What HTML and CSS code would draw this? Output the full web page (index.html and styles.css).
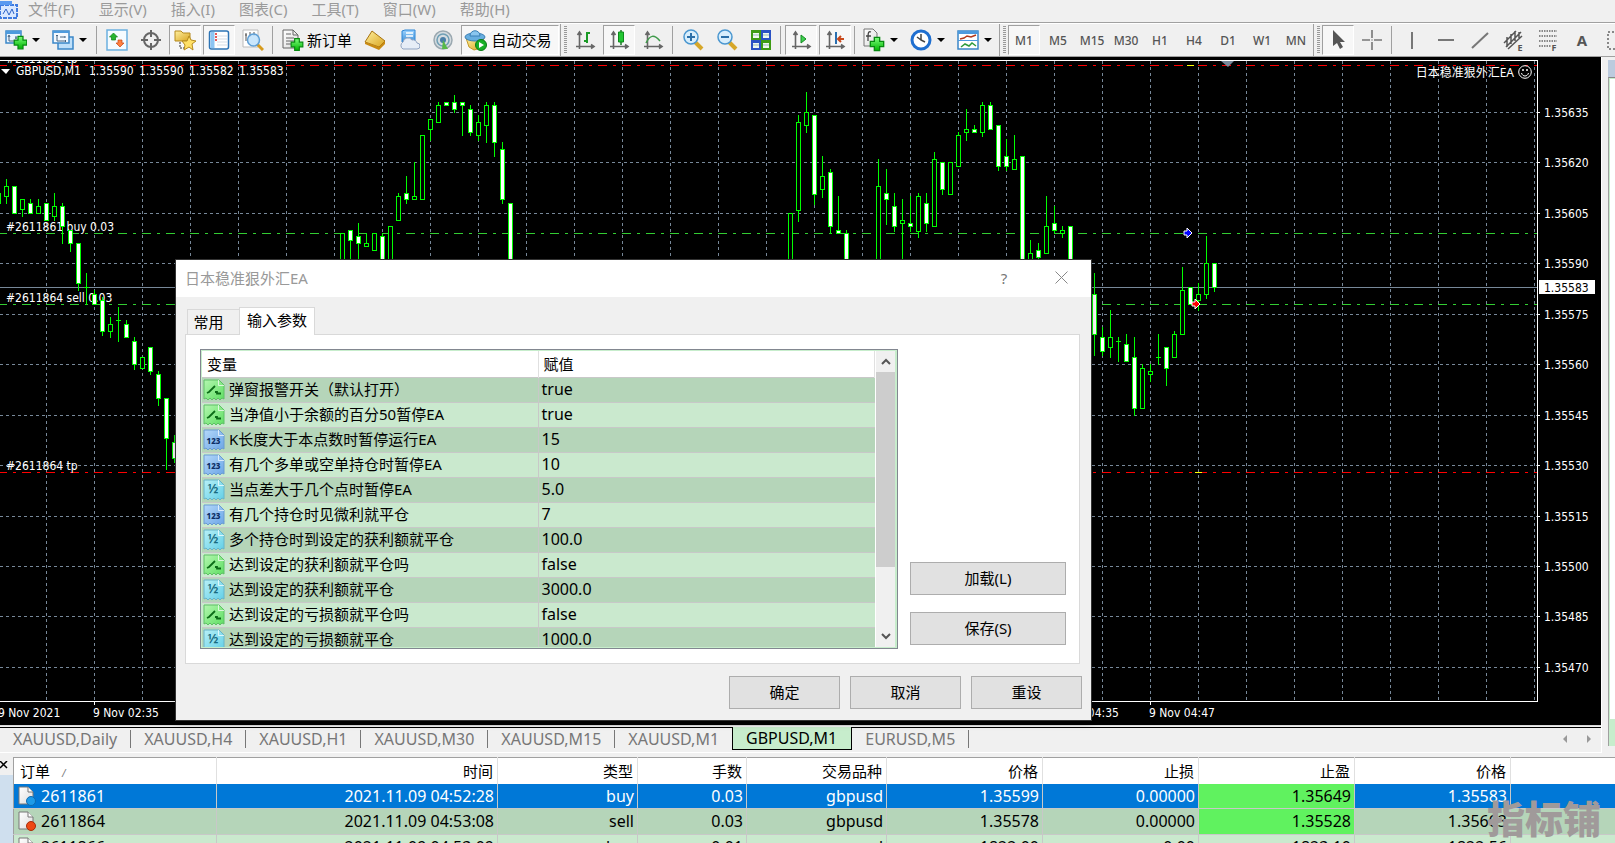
FILE: index.html
```
<!DOCTYPE html>
<html lang="zh-CN">
<head>
    <meta charset="UTF-8">
    <meta name="viewport" content="width=device-width, initial-scale=1.0">
    <title>GBPUSD,M1</title>
    <link rel="stylesheet" href="styles.css">
</head>
<body>
    <svg class="defs" width="0" height="0">
        <defs>
            <linearGradient id="g-green" x1="0" y1="0" x2="0" y2="1"><stop offset="0" stop-color="#7dff7d"/><stop offset="1" stop-color="#00b400"/></linearGradient>
            <linearGradient id="g-gold" x1="0" y1="0" x2="1" y2="1"><stop offset="0" stop-color="#fff0a0"/><stop offset="1" stop-color="#d9a520"/></linearGradient>
            <linearGradient id="g-blue" x1="0" y1="0" x2="0" y2="1"><stop offset="0" stop-color="#9fd4ff"/><stop offset="1" stop-color="#3d8fd6"/></linearGradient>
            <linearGradient id="g-page" x1="0" y1="0" x2="1" y2="1"><stop offset="0" stop-color="#fff"/><stop offset="1" stop-color="#dcdcdc"/></linearGradient>
            <linearGradient id="p-green" x1="0" y1="0" x2="1" y2="1"><stop offset="0" stop-color="#b4f7b0"/><stop offset="1" stop-color="#5ede62"/></linearGradient>
            <linearGradient id="p-blue" x1="0" y1="0" x2="1" y2="1"><stop offset="0" stop-color="#b4d8fa"/><stop offset="1" stop-color="#6ba5e6"/></linearGradient>
            <linearGradient id="p-cyan" x1="0" y1="0" x2="1" y2="1"><stop offset="0" stop-color="#b8f0f7"/><stop offset="1" stop-color="#62cfe6"/></linearGradient>
            <symbol id="plus" viewBox="0 0 12 12"><path d="M4 1h4v3h3v4H8v3H4V8H1V4h3z" fill="url(#g-green)" stroke="#078a10"/></symbol>
            <symbol id="axes" viewBox="0 0 22 22"><path d="M5.500 4v16M2 17.500h17M3.500 6l2-3 2 3M17 15.500l3 2-3 2" fill="none" stroke="#666" stroke-width="1.600"/></symbol>
            <symbol id="paper" viewBox="0 0 22 22"><path d="M1 1h15l5 5v14l-2-1-2 2-2-2-2 2-2-2-2 2-2-2-2 2-2-2-2 1z"/><path d="M15.500 1v5.500H21" fill="none" stroke="#fff" stroke-opacity=".7"/></symbol>
            <symbol id="i-bool" viewBox="0 0 22 22"><use href="#paper" fill="url(#p-green)" stroke="#5fbf66"/><path d="M4 14l2-1 6-6M12 13h2v1.500h4" fill="none" stroke="#0b6b17" stroke-width="1.800"/></symbol>
            <symbol id="i-int" viewBox="0 0 22 22"><use href="#paper" fill="url(#p-blue)" stroke="#6a9bd0"/><text x="10.500" y="15" class="glyph" fill="#0d2f66">123</text></symbol>
            <symbol id="i-dbl" viewBox="0 0 22 22"><use href="#paper" fill="url(#p-cyan)" stroke="#68b4c8"/><text x="10" y="14" class="glyph half" fill="#176a80">½</text></symbol>
            <symbol id="i-doc" viewBox="0 0 20 22"><path d="M2 2h9l5 5v12H2z" fill="url(#g-page)" stroke="#777"/><path d="M11 2v5h5" fill="#fff" stroke="#777"/></symbol>
        </defs>
    </svg>

    <nav class="menu-bar">
        <svg class="app-icon" width="18" height="19" viewBox="0 0 18 19"><path d="M0 5h17v13H0z" fill="#d9e8ff" stroke="#3f7be0" stroke-width="2" stroke-dasharray="4 1"/><path d="M0 1h12v4H0z" fill="#5a9af0"/><path d="M3 14l3-5 3 6 3-6 2 5" fill="none" stroke="#2a62c8"/></svg>
        <a href="#">文件(F)</a>
        <a href="#">显示(V)</a>
        <a href="#">插入(I)</a>
        <a href="#">图表(C)</a>
        <a href="#">工具(T)</a>
        <a href="#">窗口(W)</a>
        <a href="#">帮助(H)</a>
    </nav>

    <div class="toolbar">
        <button class="tool drop" aria-label="新图表"><svg width="22" height="22" viewBox="0 0 22 22"><path d="M1 2h15v12H1z" fill="#eaf4ff" stroke="#3b87c8" stroke-width="1.500"/><path d="M1 2h15v3H1z" fill="#4d9add"/><path d="M4 7v5h8M3 8l1-2 1 2M10 9h2M11 7v3" fill="none" stroke="#47637f"/><use href="#plus" x="8" y="6" width="15" height="15"/></svg></button>
        <button class="tool drop" aria-label="配置"><svg width="22" height="22" viewBox="0 0 22 22"><path d="M6 8h15v12H6z" fill="#bfe0fa" stroke="#3b87c8" stroke-width="1.500"/><path d="M1 2h16v12H1z" fill="#f3f9ff" stroke="#3b87c8" stroke-width="1.500"/><path d="M1 2h16v2H1z" fill="#4d9add"/><path d="M5 6v6h9M4 7l1-1 1 1M13 11l1 1-1 1M8 8h5M13 7v2" fill="none" stroke="#47637f"/></svg></button>
        <span class="sep"></span>
        <button class="tool" aria-label="市场报价"><svg width="22" height="22" viewBox="0 0 22 22"><path d="M1 1h20v20H1z" fill="#f5fbff" stroke="#6bb0e0" stroke-width="1.500"/><path d="M7.500 4l4 4H9.500v3h-4V8h-2z" fill="#27b52f" stroke="#0f7f18" stroke-width=".7"/><path d="M14 18l4-4h-2v-3h-4v3h-2z" fill="#ff8040" stroke="#c84510" stroke-width=".7"/></svg></button>
        <button class="tool" aria-label="数据窗口"><svg width="22" height="22" viewBox="0 0 22 22"><circle cx="11" cy="11" r="7" fill="none" stroke="#666" stroke-width="2"/><path d="M11 1v7M11 14v7M1 11h7M14 11h7" stroke="#666" stroke-width="2"/></svg></button>
        <button class="tool on" aria-label="导航"><svg width="22" height="22" viewBox="0 0 22 22"><path d="M1 2h6l2 2h7v8H1z" fill="url(#g-gold)" stroke="#b58a1e"/><path d="M6 13v6h4" fill="none" stroke="#333" stroke-dasharray="2 1"/><path d="M15 7l2 4 5 1-4 3 1 6-4-3-5 3 1-5-3-4h5z" fill="#ffe066" stroke="#b58a1e"/></svg></button>
        <button class="tool on" aria-label="终端"><svg width="22" height="22" viewBox="0 0 22 22"><rect x="1.500" y="2" width="19" height="18" rx="2" fill="#fff" stroke="#2e75b6" stroke-width="1.500"/><path d="M2.500 3h4v16h-4z" fill="#8cc4f2"/><path d="M9 7h10M9 10h10M9 13h10M9 16h10" stroke="#d5dde5"/><path d="M7 5h2M7 8h2M7 11h2" stroke="#e02020" stroke-width="1.500"/></svg></button>
        <button class="tool" aria-label="策略测试"><svg width="22" height="22" viewBox="0 0 22 22"><path d="M1 1h15v17H1z" fill="#fff" stroke="#bbb"/><path d="M4 4v8M3 6h2M8 3v5M12 3v4" stroke="#555"/><path d="M15 15l6 6" stroke="#d69a1c" stroke-width="3"/><circle cx="11.500" cy="11" r="6" fill="#bfe2fb" fill-opacity=".85" stroke="#5e9fd6" stroke-width="1.500"/></svg></button>
        <span class="sep"></span>
        <button class="tool wide"><svg width="22" height="24" viewBox="0 0 22 24"><path d="M1 2h10l5 5v13H1z" fill="url(#g-page)" stroke="#666"/><path d="M11 2v5h5M4 6h5M4 10h8M4 13h8M4 16h5" fill="none" stroke="#666"/><use href="#plus" x="8" y="9" width="14" height="15"/></svg><span>新订单</span></button>
        <button class="tool" aria-label="MetaEditor"><svg width="22" height="22" viewBox="0 0 22 22"><path d="M8 2l13 10-6 6-14-5z" fill="url(#g-gold)" stroke="#a87310"/><path d="M1 13l14 5 6-6v3l-6 6-14-6z" fill="#c98b12"/></svg></button>
        <button class="tool" aria-label="社区"><svg width="22" height="22" viewBox="0 0 22 22"><path d="M4 2l3-1h10v12H4z" fill="url(#g-blue)" stroke="#2d86d6"/><path d="M8 4h7M8 7h7" stroke="#fff" stroke-width="1.500"/><path d="M5 20a4 4 0 0 1 0-7 5 5 0 0 1 9-2 4 4 0 0 1 5 3 3 3 0 0 1 0 6z" fill="#e6edf7" stroke="#8fa3c2"/></svg></button>
        <button class="tool" aria-label="信号"><svg width="22" height="22" viewBox="0 0 22 22"><circle cx="11" cy="11" r="9" fill="#d5dce0" stroke="#9aa8b0" stroke-width="1.500"/><circle cx="11" cy="11" r="6" fill="none" stroke="#6f9fb5" stroke-width="1.500"/><circle cx="11" cy="11" r="3" fill="#4a7fa8"/><path d="M11 11l5 9H10z" fill="#57b947"/></svg></button>
        <button class="tool wide on"><svg width="24" height="22" viewBox="0 0 24 22"><path d="M2 9h18l-3 10-7 2-5-3z" fill="url(#g-gold)" stroke="#c39a28"/><ellipse cx="11" cy="8" rx="10" ry="4" fill="#67aee0" stroke="#3a7fb5"/><path d="M6 7c0-7 10-7 10 0z" fill="#8ac6ef" stroke="#3a7fb5"/><circle cx="17" cy="16" r="5.500" fill="#17b026" stroke="#0b7a15"/><path d="M15 13l5 3-5 3z" fill="#fff"/></svg><span>自动交易</span></button>
        <span class="grip"></span>
        <button class="tool" aria-label="柱状图"><svg width="22" height="22" viewBox="0 0 22 22"><use href="#axes"/><path d="M13 3v11M13 4h3M10 12h3" stroke="#1b9a26" stroke-width="2"/></svg></button>
        <button class="tool on" aria-label="蜡烛图"><svg width="22" height="22" viewBox="0 0 22 22"><use href="#axes"/><path d="M13 1v15" stroke="#1b7a26" stroke-width="1.500"/><path d="M10.500 3h5v10h-5z" fill="#22c632" stroke="#0d8a1b"/></svg></button>
        <button class="tool" aria-label="折线图"><svg width="22" height="22" viewBox="0 0 22 22"><use href="#axes"/><path d="M4 14c4-8 8-9 14-2" fill="none" stroke="#3f9a4a" stroke-width="1.500"/></svg></button>
        <span class="sep"></span>
        <button class="tool" aria-label="放大"><svg width="22" height="22" viewBox="0 0 22 22"><path d="M13 13l7 7" stroke="#d6a72a" stroke-width="4"/><circle cx="9" cy="8" r="7" fill="#d8eefc" stroke="#4a97d0" stroke-width="1.500"/><path d="M5 8h8M9 4v8" stroke="#2b6fa8" stroke-width="2"/></svg></button>
        <button class="tool" aria-label="缩小"><svg width="22" height="22" viewBox="0 0 22 22"><path d="M13 13l7 7" stroke="#d6a72a" stroke-width="4"/><circle cx="9" cy="8" r="7" fill="#d8eefc" stroke="#4a97d0" stroke-width="1.500"/><path d="M5 8h8" stroke="#2b6fa8" stroke-width="2"/></svg></button>
        <button class="tool" aria-label="平铺"><svg width="22" height="22" viewBox="0 0 22 22"><path d="M1 1h10v10H1zM11 11h10v10H11z" fill="#3d9b12"/><path d="M11 1h10v10H11zM1 11h10v10H1z" fill="#2a52c4"/><path d="M3 4h6v5H3zM13 4h6v5h-6zM3 14h6v5H3zM13 14h6v5h-6z" fill="#eef8ee"/><path d="M3 6h6M13 6h6M3 16h6M13 16h6" stroke="#9bb"/></svg></button>
        <span class="sep"></span>
        <button class="tool on" aria-label="自动滚动"><svg width="22" height="22" viewBox="0 0 22 22"><use href="#axes"/><path d="M11 6l5 4-5 4z" fill="#3fd050" stroke="#128a20"/></svg></button>
        <button class="tool on" aria-label="图表平移"><svg width="22" height="22" viewBox="0 0 22 22"><use href="#axes"/><path d="M12 3v12" stroke="#2a6fb0" stroke-width="2"/><path d="M14 10h6M17 7l-3 3 3 3" fill="none" stroke="#c8481a" stroke-width="2"/></svg></button>
        <span class="sep"></span>
        <button class="tool drop" aria-label="指标"><svg width="22" height="24" viewBox="0 0 22 24"><path d="M1 1h9l4 4v13H1z" fill="url(#g-page)" stroke="#777"/><path d="M8 4c-3-1-3 1-3 9M3 8h5" fill="none" stroke="#444" stroke-width="1.300"/><use href="#plus" x="6" y="8" width="16" height="16"/></svg></button>
        <button class="tool drop" aria-label="时间周期"><svg width="22" height="22" viewBox="0 0 22 22"><circle cx="11" cy="11" r="9" fill="#fff" stroke="#1f6fd0" stroke-width="3"/><path d="M11 5v6l4 2M7 8l4 3" fill="none" stroke="#444" stroke-width="1.500"/></svg></button>
        <button class="tool drop" aria-label="模板"><svg width="22" height="22" viewBox="0 0 22 22"><path d="M1 2h20v18H1z" fill="#fff" stroke="#3b87c8" stroke-width="1.500"/><path d="M1 2h20v3H1zM1 11h20v1H1z" fill="#4d9add"/><path d="M3 10l4-1 3-2 4 1 5-2" fill="none" stroke="#b3391b" stroke-width="1.500"/><path d="M4 18l4-3 4 2 3-3 4 3" fill="none" stroke="#2f9a3a" stroke-width="1.500"/></svg></button>
        <span class="grip"></span>
        <button class="tool tf on">M1</button>
        <button class="tool tf">M5</button>
        <button class="tool tf">M15</button>
        <button class="tool tf">M30</button>
        <button class="tool tf">H1</button>
        <button class="tool tf">H4</button>
        <button class="tool tf">D1</button>
        <button class="tool tf">W1</button>
        <button class="tool tf">MN</button>
        <span class="grip"></span>
        <button class="tool on" aria-label="光标"><svg width="22" height="22" viewBox="0 0 22 22"><path d="M6 1v16l4-3 3 6 3-2-3-5h5z" fill="#555"/></svg></button>
        <button class="tool" aria-label="十字准线"><svg width="22" height="22" viewBox="0 0 22 22"><path d="M11 1v8M11 13v8M1 11h8M13 11h8M10.500 11h1" stroke="#777" stroke-width="1.600"/></svg></button>
        <span class="sep"></span>
        <button class="tool" aria-label="垂直线"><svg width="22" height="22" viewBox="0 0 22 22"><path d="M11 3v17" stroke="#777" stroke-width="2"/></svg></button>
        <button class="tool" aria-label="水平线"><svg width="22" height="22" viewBox="0 0 22 22"><path d="M3 11h16" stroke="#777" stroke-width="2"/></svg></button>
        <button class="tool" aria-label="趋势线"><svg width="22" height="22" viewBox="0 0 22 22"><path d="M3 19L19 4" stroke="#777" stroke-width="2"/></svg></button>
        <button class="tool" aria-label="等距通道"><svg width="22" height="22" viewBox="0 0 22 22"><path d="M1 14L13 2M3 18L18 3M5 20L19 7M4 8v10M8 5v10M12 2v10M16 3v6" stroke="#555" stroke-width="1.500"/><text x="17" y="22" class="mark">E</text></svg></button>
        <button class="tool" aria-label="斐波纳契"><svg width="22" height="22" viewBox="0 0 22 22"><path d="M2 2h18M2 7h18M2 12h18M2 17h12" stroke="#666" stroke-width="1.500" stroke-dasharray="1.500 1"/><text x="17" y="22" class="mark">F</text></svg></button>
        <button class="tool letter">A</button>
        <button class="tool" aria-label="文本标签"><svg width="22" height="22" viewBox="0 0 22 22"><path d="M3 3h17v17H3z" fill="none" stroke="#666" stroke-width="1.500" stroke-dasharray="2 2"/></svg></button>
    </div>

    <div class="workspace">
        <main class="charts">
            <div class="chart">
                <div class="plot-row">
                    <svg id="plot" class="plot"></svg>
                    <svg id="price-axis" class="price-axis"></svg>
                </div>
                <svg id="time-axis" class="time-axis"></svg>
                <div class="chart-title">日本稳准狠外汇EA <svg width="14" height="14" viewBox="0 0 14 14"><circle cx="7" cy="7" r="6.300" fill="#000" stroke="#fff"/><circle cx="5" cy="5" r="1" fill="#fff"/><circle cx="9" cy="5" r="1" fill="#fff"/><path d="M3.500 8c1 4 6 4 7 0" fill="none" stroke="#fff"/></svg></div>
            </div>
            <div class="chart-tabs">
                <button>XAUUSD,Daily</button>
                <button>XAUUSD,H4</button>
                <button>XAUUSD,H1</button>
                <button>XAUUSD,M30</button>
                <button>XAUUSD,M15</button>
                <button>XAUUSD,M1</button>
                <button class="active">GBPUSD,M1</button>
                <button>EURUSD,M5</button>
                <span class="tab-scroll"><svg width="30" height="10" viewBox="0 0 30 10"><path d="M5 1v8L1 5zM25 1v8l4-4z" fill="#999"/></svg></span>
            </div>
        </main>
        <aside class="side-panel">
            <div class="side-head"></div>
            <div class="side-body"></div>
        </aside>

        <section class="dialog" role="dialog" aria-label="日本稳准狠外汇EA">
            <header class="dialog-title">
                <span>日本稳准狠外汇EA</span>
                <button class="help" aria-label="帮助">?</button>
                <button aria-label="关闭"><svg width="13" height="13" viewBox="0 0 13 13"><path d="M.5.5l12 12M12.500.5l-12 12" stroke="#888"/></svg></button>
            </header>
            <div class="dialog-tabs">
                <button>常用</button>
                <button class="active">输入参数</button>
            </div>
            <div class="dialog-page">
                <div class="param-box">
                    <div class="param-list">
                        <table class="params">
                            <thead><tr><th class="name">变量</th><th>赋值</th></tr></thead>
                            <tbody>
                                <tr><td><svg><use href="#i-bool"/></svg>弹窗报警开关（默认打开）</td><td>true</td></tr>
                                <tr><td><svg><use href="#i-bool"/></svg>当净值小于余额的百分50暂停EA</td><td>true</td></tr>
                                <tr><td><svg><use href="#i-int"/></svg>K长度大于本点数时暂停运行EA</td><td>15</td></tr>
                                <tr><td><svg><use href="#i-int"/></svg>有几个多单或空单持仓时暂停EA</td><td>10</td></tr>
                                <tr><td><svg><use href="#i-dbl"/></svg>当点差大于几个点时暂停EA</td><td>5.0</td></tr>
                                <tr><td><svg><use href="#i-int"/></svg>有几个持仓时见微利就平仓</td><td>7</td></tr>
                                <tr><td><svg><use href="#i-dbl"/></svg>多个持仓时到设定的获利额就平仓</td><td>100.0</td></tr>
                                <tr><td><svg><use href="#i-bool"/></svg>达到设定的获利额就平仓吗</td><td>false</td></tr>
                                <tr><td><svg><use href="#i-dbl"/></svg>达到设定的获利额就平仓</td><td>3000.0</td></tr>
                                <tr><td><svg><use href="#i-bool"/></svg>达到设定的亏损额就平仓吗</td><td>false</td></tr>
                                <tr><td><svg><use href="#i-dbl"/></svg>达到设定的亏损额就平仓</td><td>1000.0</td></tr>
                            </tbody>
                        </table>
                    </div>
                    <div class="scrollbar">
                        <button aria-label="向上"><svg width="10" height="7" viewBox="0 0 10 7"><path d="M1 6l4-4 4 4" fill="none" stroke="#555" stroke-width="2"/></svg></button>
                        <div class="thumb"></div>
                        <button aria-label="向下"><svg width="10" height="7" viewBox="0 0 10 7"><path d="M1 1l4 4 4-4" fill="none" stroke="#555" stroke-width="2"/></svg></button>
                    </div>
                </div>
                <div class="side-buttons">
                    <button class="btn">加载(L)</button>
                    <button class="btn">保存(S)</button>
                </div>
            </div>
            <footer class="dialog-actions">
                <button class="btn">确定</button>
                <button class="btn">取消</button>
                <button class="btn">重设</button>
            </footer>
        </section>
    </div>

    <section class="terminal">
        <div class="terminal-side"><button aria-label="关闭"><svg width="8" height="8" viewBox="0 0 8 8"><path d="M0 0l7 7M7 0L0 7" stroke="#000" stroke-width="1.500"/></svg></button></div>
        <table class="orders">
            <colgroup><col class="c-order"><col class="c-time"><col class="c-type"><col class="c-lots"><col class="c-symbol"><col class="c-price"><col class="c-price"><col class="c-price"><col class="c-price"><col></colgroup>
            <thead>
                <tr><th>订单<i class="sort">/</i></th><th>时间</th><th>类型</th><th>手数</th><th>交易品种</th><th>价格</th><th>止损</th><th>止盈</th><th>价格</th><th></th></tr>
            </thead>
            <tbody>
                <tr class="selected"><td><svg width="20" height="22"><use href="#i-doc"/><circle cx="14" cy="16" r="4.500" fill="#1e9be8" stroke="#0f6bb0"/></svg>2611861</td><td>2021.11.09 04:52:28</td><td>buy</td><td>0.03</td><td>gbpusd</td><td>1.35599</td><td>0.00000</td><td class="hit">1.35649</td><td>1.35583</td><td></td></tr>
                <tr><td><svg width="20" height="22"><use href="#i-doc"/><circle cx="14" cy="16" r="4.500" fill="#ee4a14" stroke="#a82c08"/></svg>2611864</td><td>2021.11.09 04:53:08</td><td>sell</td><td>0.03</td><td>gbpusd</td><td>1.35578</td><td>0.00000</td><td class="hit">1.35528</td><td>1.35603</td><td></td></tr>
                <tr><td><svg width="20" height="22"><use href="#i-doc"/><circle cx="14" cy="16" r="4.500" fill="#1e9be8" stroke="#0f6bb0"/></svg>2611866</td><td>2021.11.09 04:53:09</td><td>buy</td><td>0.01</td><td>xauusd</td><td>1822.00</td><td>0.00</td><td>1823.10</td><td>1822.56</td><td></td></tr>
            </tbody>
        </table>
        <div class="watermark">指标铺</div>
    </section>

    <script src="chart.js"></script>
</body>
</html>
```
FILE: styles.css
```
* { box-sizing: border-box; }
body { margin: 0; height: 100vh; display: flex; flex-direction: column; overflow: hidden; background: #f0f0f0; color: #000; font-family: "Noto Sans", "Noto Sans CJK SC", sans-serif; font-size: 15px; }
button { font: inherit; color: inherit; background: none; border: none; padding: 0; }
.defs { position: absolute; }
.glyph { font-size: 8px; font-weight: 800; text-anchor: middle; }
.glyph.half { font-size: 13px; font-weight: 600; }
.mark { font-size: 9px; font-weight: 700; text-anchor: middle; fill: #555; }

/* menu */
.menu-bar { flex: none; display: flex; gap: 24px; height: 23px; border-bottom: 1px solid #a0a0a0; line-height: 19px; }
.menu-bar a { color: #9a9a9a; text-decoration: none; }
.app-icon { margin-right: -14px; }

/* toolbar */
.toolbar { flex: none; display: flex; align-items: center; height: 34px; border-top: 1px solid #fff; border-bottom: 1px solid #a0a0a0; overflow: hidden; }
.tool { flex: none; display: flex; align-items: center; justify-content: center; width: 32px; height: 30px; margin: 0 1px; }
.tool svg { flex: none; }
.tool.on { background: #f7f7f7; border: 1px solid; border-color: #a0a0a0 #fff #fff #a0a0a0; }
.tool.drop { width: 45px; gap: 5px; justify-content: flex-start; padding-left: 4px; }
.tool.drop::after { content: ""; border: 4px solid transparent; border-top-color: #000; border-bottom: none; }
.tool.wide { width: 80px; gap: 3px; white-space: nowrap; }
.tool.wide span { padding-bottom: 2px; }
.tool.wide.on { gap: 3px; width: 98px; padding-right: 4px; }
.tool.tf { font-size: 12px; font-weight: 500; color: #555; }
.tool.letter { font-weight: 700; color: #555; }
.sep { flex: none; width: 1px; height: 28px; margin: 0 3px 0 2px; background: #a0a0a0; }
.grip { flex: none; width: 8px; height: 34px; border-left: 1px solid #a0a0a0; background: repeating-linear-gradient(#999 0 1px, #f0f0f0 1px 2px) 3px 3px / 3px 27px no-repeat; }

/* chart */
.workspace { flex: 1; min-height: 0; display: flex; position: relative; }
.charts { flex: 1; min-width: 0; display: flex; flex-direction: column; }
.chart { flex: 1; min-height: 0; display: flex; flex-direction: column; background: #000; padding-top: 3px; position: relative; }
.plot-row { flex: 1; min-height: 0; display: flex; }
.plot { flex: 1; min-width: 0; height: 100%; border: 1px solid #fff; border-left: none; }
.price-axis { flex: none; width: 63px; height: 100%; }
.time-axis { flex: none; width: 100%; height: 23px; }
.plot text, .price-axis text, .time-axis text { font-family: "DejaVu Sans Condensed", "Noto Sans", sans-serif; font-size: 12px; fill: #fff; white-space: pre; }
.price-axis text.current { fill: #000; }
.chart-title { position: absolute; top: 6px; right: 69px; display: flex; align-items: center; gap: 4px; font-size: 12px; color: #fff; }
.grid { stroke: #778899; stroke-dasharray: 3 3; }
.order-line { stroke-dasharray: 9 6 3 6; stroke-dashoffset: 2; }
.candle { stroke: #0f0; }

.chart-tabs { flex: none; display: flex; height: 28px; padding-bottom: 3px; border-bottom: 1px solid #fff; font-size: 16px; color: #777; background: linear-gradient(#d8d8d8 0 1px, #f0f0f0 1px 2px, #000 2px 3px, #f0f0f0 3px); }
.chart-tabs button { padding: 3px 14px 0 13px; background: linear-gradient(#777, #777) right 5px / 1px 18px no-repeat; }
.chart-tabs button.active { margin: 2px 0 -1px -1px; padding-top: 0; color: #000; background: #c7edcc; border: 1px solid #000; border-top: none; }
.tab-scroll { margin: 8px 9px 0 auto; line-height: 10px; }

.side-panel { flex: none; width: 14px; background: #f0f0f0; border-left: 1px solid #fff; padding: 3px 0 0 6px; display: flex; flex-direction: column; }
.side-head { height: 17px; background: #bccbde; }
.side-body { flex: 1; margin-bottom: 7px; background: linear-gradient(#fff, #fff) no-repeat 1px 1px / 100% 640px, #c7edcc; border-top: 1px solid #888; border-left: 1px solid #a0a0a0; }

/* dialog */
.dialog { position: absolute; left: 176px; top: 203px; width: 915px; background: #f0f0f0; box-shadow: 0 0 0 1px #333, 0 2px 8px rgba(0,0,0,0.3); }
.dialog-title { display: flex; align-items: center; height: 37px; padding: 0 17px 2px 9px; background: #fff; color: #999; }
.dialog-title span { flex: 1; }
.dialog-title button { display: flex; align-items: center; justify-content: center; width: 26px; }
.dialog-title .help { margin-right: 31px; color: #777; }
.dialog-tabs { display: flex; align-items: flex-end; height: 37px; padding-left: 11px; }
.dialog-tabs button { height: 25px; width: 52px; padding: 0 10px 2px 0; border: 1px solid #d9d9d9; border-width: 1px 0 0 1px; }
.dialog-tabs button.active { position: relative; height: 28px; width: 76px; padding: 0 0 4px; margin-bottom: -1px; background: #fff; border-width: 1px 1px 0; }
.dialog-page { display: flex; justify-content: space-between; margin: 0 11px 0 9px; padding: 14px 13px 14px 14px; border: 1px solid #d9d9d9; background: #fff; }
.param-box { display: flex; width: 698px; height: 300px; border: 1px solid #828790; padding: 1px 2px 1px 1px; background: #c7edcc; }
.param-list { flex: 1; overflow: hidden; }
.params { width: 100%; table-layout: fixed; border-collapse: collapse; }
.params th { height: 26px; padding: 0 5px; background: #fff; font-weight: 400; text-align: left; border-right: 1px solid #e0e0e0; }
.params th.name { width: 336px; }
.params td { height: 25px; padding: 0 3px; line-height: 23px; white-space: nowrap; border-right: 1px solid #c8c8c8; border-top: 1px solid #c8c8c8; background: #cae9ce; }
.params tr:nth-child(odd) td { background: #b5d5b9; }
.params td:last-child { border-right: none; font-size: 16px; }
.params td svg { width: 22px; height: 22px; margin: 1px 4px 0 -2px; vertical-align: top; }
.scrollbar { width: 20px; display: flex; flex-direction: column; background: #f0f0f0; border-left: 1px solid #fff; }
.scrollbar button { height: 21px; display: flex; align-items: center; justify-content: center; }
.thumb { height: 195px; margin-bottom: auto; background: #cdcdcd; }
.side-buttons { display: flex; flex-direction: column; justify-content: flex-end; gap: 17px; padding-bottom: 4px; }
.btn { height: 33px; padding-bottom: 2px; background: #e1e1e1; border: 1px solid #adadad; color: #000; }
.side-buttons .btn { width: 156px; }
.dialog-actions { display: flex; justify-content: flex-end; gap: 10px; padding: 12px 9px 11px; }
.dialog-actions .btn { width: 111px; }

/* terminal */
.terminal { flex: none; display: flex; height: 90px; padding-top: 4px; overflow: hidden; position: relative; }
.terminal-side { flex: none; width: 13px; background: linear-gradient(#f0f0f0 18px, #cfdfee 18px); }
.terminal-side button { display: block; margin-top: 2px; line-height: 8px; }
.orders { flex: 1; width: 100%; height: 103px; table-layout: fixed; border-collapse: collapse; border-top: 1px solid #a0a0a0; border-left: 1px solid #a0a0a0; }
.orders th { height: 26px; padding: 0 4px; background: #fff; font-weight: 400; text-align: right; border-right: 1px solid #e0e0e0; }
.orders td { height: 25px; padding: 0 3px; font-size: 16px; line-height: 24px; text-align: right; white-space: nowrap; background: #cae9ce; border-right: 1px solid #c8c8c8; border-bottom: 1px solid #c8c8c8; }
.orders th:first-child { padding-left: 6px; text-align: left; }
.orders td:first-child { text-align: left; }
.orders td:first-child svg { margin: 1px 4px 0 0; vertical-align: top; }
.orders tr:nth-child(2) td { background: #b5d5b9; }
.orders tr.selected td { background: #0078d7; color: #fff; }
.orders tr td.hit, .orders tr.selected td.hit { background: #60f25f; color: #000; }
.orders th:last-child, .orders td:last-child { border-right: none; }
.sort { margin-left: 12px; font-size: 10px; color: #777; }
.c-order { width: 203px; }
.c-time { width: 281px; }
.c-type, .c-symbol { width: 140px; }
.c-lots { width: 109px; }
.c-price { width: 156px; }
.watermark { position: absolute; right: 14px; bottom: 6px; font-size: 38px; line-height: 38px; font-weight: 900; color: #a09a9a; }
```
FILE: chart.js
```
const NS = 'http://www.w3.org/2000/svg';
const TOP = 61;       // window y of the first plot row
const FIRST_X = 6;    // centre of candle 0
const STEP = 8;

// index, high, body top, body bottom, low, falling (1) or rising (0)
const candles = [
    [-1, 193, 193, 203, 203, 0], [0, 179, 186, 196, 203, 0], [1, 186, 186, 213, 213, 1], [2, 199, 199, 209, 216, 0],
    [3, 199, 203, 213, 213, 1], [4, 199, 206, 213, 213, 0], [5, 203, 203, 220, 220, 1], [6, 193, 206, 216, 220, 0],
    [7, 203, 206, 226, 243, 1], [8, 230, 230, 243, 251, 1], [9, 243, 243, 283, 290, 1], [10, 273, 287, 287, 304, 0],
    [11, 290, 294, 304, 304, 1], [12, 297, 300, 331, 335, 1], [13, 317, 324, 331, 337, 0], [14, 307, 320, 320, 341, 0],
    [15, 320, 324, 337, 337, 1], [16, 337, 341, 364, 369, 1], [17, 357, 357, 368, 368, 0], [18, 347, 347, 371, 374, 1],
    [19, 371, 374, 398, 405, 1], [20, 398, 398, 438, 469, 1], [21, 435, 442, 458, 462, 1],
    [42, 233, 233, 290, 290, 0], [43, 230, 230, 240, 290, 1], [44, 223, 236, 243, 290, 1], [45, 233, 243, 246, 246, 0],
    [46, 233, 233, 250, 250, 0], [47, 233, 236, 290, 290, 1], [48, 226, 226, 290, 290, 0], [49, 193, 196, 220, 220, 0],
    [50, 176, 193, 199, 203, 1], [51, 162, 196, 199, 199, 0], [52, 135, 135, 199, 199, 0], [53, 119, 119, 129, 140, 0],
    [54, 102, 105, 122, 122, 0], [55, 102, 102, 105, 105, 1], [56, 95, 102, 109, 112, 1], [57, 102, 102, 105, 135, 1],
    [58, 105, 109, 132, 135, 1], [59, 115, 122, 135, 140, 0], [60, 102, 105, 125, 142, 0], [61, 102, 105, 142, 156, 1],
    [62, 142, 149, 199, 203, 1], [63, 203, 203, 290, 290, 1],
    [98, 213, 213, 290, 290, 0], [99, 115, 122, 210, 221, 0], [100, 92, 112, 125, 132, 0], [101, 115, 115, 194, 204, 1],
    [102, 156, 176, 189, 197, 0], [103, 169, 172, 226, 233, 1], [104, 196, 230, 233, 233, 1], [105, 230, 233, 290, 290, 1],
    [109, 159, 186, 290, 290, 0], [110, 169, 193, 199, 224, 1], [111, 193, 206, 226, 231, 1], [112, 199, 220, 223, 290, 0],
    [113, 196, 223, 226, 231, 1], [114, 193, 196, 231, 237, 0], [115, 193, 203, 223, 231, 1], [116, 152, 159, 226, 226, 0],
    [117, 162, 162, 189, 194, 1], [118, 162, 162, 194, 194, 0], [119, 132, 135, 166, 166, 0], [120, 109, 129, 132, 140, 0],
    [121, 125, 129, 132, 132, 1], [122, 102, 105, 132, 136, 0], [123, 102, 105, 129, 129, 1], [124, 125, 125, 166, 170, 1],
    [125, 139, 156, 166, 170, 1], [126, 135, 159, 169, 169, 0], [127, 156, 156, 290, 290, 1], [128, 240, 253, 290, 290, 0],
    [129, 243, 250, 257, 290, 1], [130, 196, 226, 253, 253, 0], [131, 206, 223, 230, 233, 1], [132, 226, 230, 233, 237, 0],
    [133, 226, 226, 290, 290, 1], [136, 273, 294, 334, 355, 1], [137, 327, 337, 351, 355, 1], [138, 310, 337, 347, 357, 0],
    [139, 337, 341, 341, 361, 0], [140, 334, 344, 361, 361, 1], [141, 337, 357, 408, 415, 1], [142, 364, 368, 408, 408, 0],
    [143, 364, 371, 374, 381, 0], [144, 334, 357, 357, 364, 0], [145, 347, 347, 368, 385, 1], [146, 331, 334, 357, 357, 0],
    [147, 267, 290, 334, 334, 0], [148, 287, 287, 304, 304, 1], [149, 283, 294, 300, 310, 0], [150, 236, 263, 294, 298, 0],
    [151, 263, 263, 287, 291, 1]
];

const prices = [
    ['1.35635', 112], ['1.35620', 162], ['1.35605', 213], ['1.35590', 263], ['1.35575', 314], ['1.35560', 364],
    ['1.35545', 415], ['1.35530', 465], ['1.35515', 516], ['1.35500', 566], ['1.35485', 616], ['1.35470', 667]
];

function add(parent, tag, attrs, text) {
    const el = document.createElementNS(NS, tag);
    for (const key in attrs) el.setAttribute(key, attrs[key]);
    if (text) el.textContent = text;
    parent.appendChild(el);
    return el;
}

function hline(parent, y, attrs) {
    add(parent, 'line', Object.assign({ x1: 0, x2: '100%', y1: y - TOP + 0.5, y2: y - TOP + 0.5 }, attrs));
}

function label(parent, x, y, text) {
    add(parent, 'text', { x: x, y: y - TOP }, text);
}

const plot = document.getElementById('plot');
for (let x = 46; x < 3000; x += 48) {
    add(plot, 'line', { x1: x + 0.5, x2: x + 0.5, y1: 0, y2: '100%', class: 'grid' });
}
prices.forEach(p => hline(plot, p[1], { class: 'grid' }));

hline(plot, 287, { stroke: '#778899' });
hline(plot, 65, { stroke: '#f00', class: 'order-line' });
hline(plot, 233, { stroke: '#32cd32', class: 'order-line' });
hline(plot, 304, { stroke: '#32cd32', class: 'order-line' });
hline(plot, 472, { stroke: '#f00', class: 'order-line' });

label(plot, 6, 63, '#2611861 tp');
label(plot, 6, 231, '#2611861 buy 0.03');
label(plot, 6, 302, '#2611864 sell 0.03');
label(plot, 6, 470, '#2611864 tp');

candles.forEach(([i, high, top, bottom, low, falling]) => {
    const x = FIRST_X + i * STEP;
    add(plot, 'line', { x1: x + 0.5, x2: x + 0.5, y1: high - TOP, y2: low - TOP + 1, class: 'candle' });
    if (top === bottom) {
        add(plot, 'line', { x1: x - 2, x2: x + 3, y1: top - TOP + 0.5, y2: top - TOP + 0.5, class: 'candle' });
    } else {
        add(plot, 'rect', { x: x - 1.5, y: top - TOP + 0.5, width: 4, height: bottom - top, class: 'candle', fill: falling ? '#fff' : '#000' });
    }
});

// trade arrows, take profit ticks and the shift marker
const arrow = 'v-2h3v-3l5 5-5 5v-3h-3z';
add(plot, 'path', { d: 'M1184 ' + (233 - TOP) + arrow, fill: '#00f', stroke: '#fff' });
add(plot, 'path', { d: 'M1192 ' + (304 - TOP) + arrow, fill: '#f00', stroke: '#fff' });
add(plot, 'rect', { x: 1187, y: 65 - TOP, width: 7, height: 1, fill: '#ff0' });
add(plot, 'rect', { x: 1195, y: 472 - TOP, width: 7, height: 1, fill: '#ff0' });
add(plot, 'path', { d: 'M1221 0h13l-6 6z', fill: '#778899' });

add(plot, 'path', { d: 'M1 8h9l-4 5z', fill: '#fff' });
label(plot, 16, 75, 'GBPUSD,M1');
['1.35590', '1.35590', '1.35582', '1.35583'].forEach((p, i) => label(plot, 89 + i * 50, 75, p));

const priceAxis = document.getElementById('price-axis');
prices.forEach(p => {
    add(priceAxis, 'rect', { x: 0, y: p[1] - TOP + 1, width: 2, height: 1, fill: '#fff' });
    add(priceAxis, 'text', { x: 6, y: p[1] - TOP + 6 }, p[0]);
});
add(priceAxis, 'rect', { x: 1, y: 280 - TOP + 1, width: 56, height: 14, fill: '#fff' });
add(priceAxis, 'text', { x: 6, y: 293 - TOP, class: 'current' }, '1.35583');

const timeAxis = document.getElementById('time-axis');
[[-2, '9 Nov 2021'], [93, '9 Nov 02:35'], [1053, '9 Nov 04:35'], [1149, '9 Nov 04:47']].forEach(t => {
    add(timeAxis, 'rect', { x: t[0] + 1, y: 0, width: 1, height: 3, fill: '#fff' });
    add(timeAxis, 'text', { x: t[0], y: 15 }, t[1]);
});
```
